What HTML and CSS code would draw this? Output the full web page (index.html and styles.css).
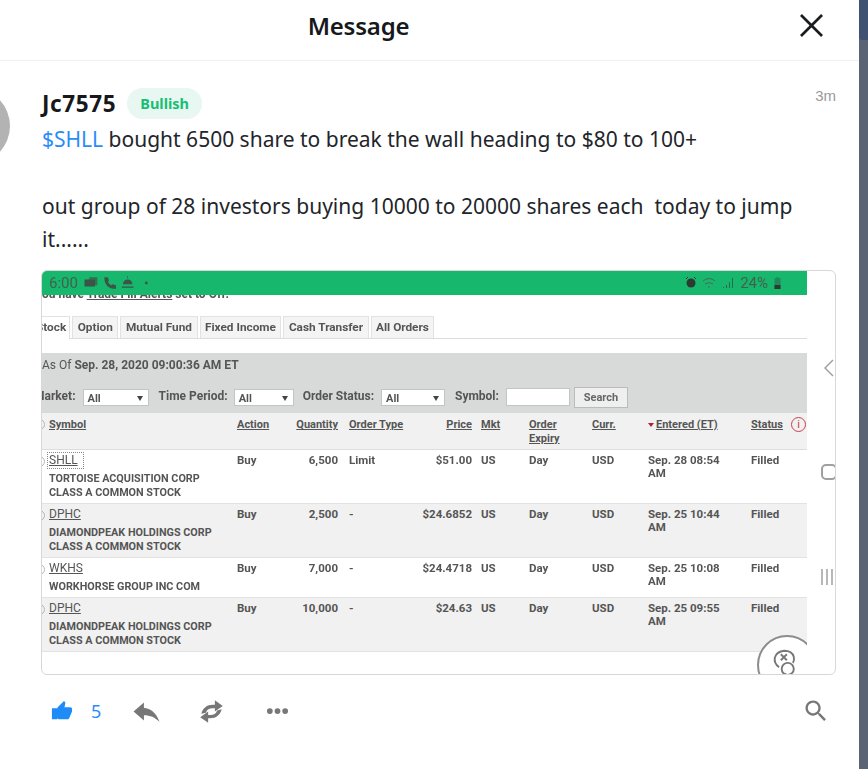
FILE: index.html
```html
<!DOCTYPE html>
<html lang="en">
<head>
  <meta charset="UTF-8" />
  <title>Message</title>
  <link rel="stylesheet" href="styles.css">
</head>
<body>
  <div class="page">
    <main class="modal">
      <header class="modal-head">
        <h1>Message</h1>
        <svg class="close-icon" viewBox="0 0 24 24"><path d="M1 1 L23 23 M23 1 L1 23" /></svg>
      </header>

      <article class="message">
        <div class="avatar"></div>
        <div class="message-body">
          <div class="author-row">
            <span class="author">Jc7575</span>
            <span class="badge">Bullish</span>
            <span class="time">3m</span>
          </div>
          <p class="text"><a href="#">$SHLL</a> bought 6500 share to break the wall heading to $80 to 100+</p>
          <p class="text text-gap">out group of 28 investors buying 10000 to 20000 shares each&nbsp; today to jump it......</p>

          <div class="shot">
            <div class="shot-inner">
              <div class="phone-bar">
                <div class="phone-left">
                  <span>6:00</span>
                  <svg viewBox="0 0 56 12" class="phone-icons-left">
                    <rect x="1" y="3" width="9" height="6" />
                    <rect x="5" y="1" width="7" height="7" opacity="0.7" />
                    <path d="M18 1 l3 0 l1 3 l-1 1 q1 2 3 3 l1 -1 l3 1 l0 3 q-10 0 -10 -10z" />
                    <path d="M33 9 h10 v1 h-10z M34 7 a4 4 0 0 1 8 0z M38 0 v2 h-.5 v-2z" />
                    <circle cx="54" cy="6" r="1.2" />
                  </svg>
                </div>
                <div class="phone-right">
                  <svg viewBox="0 0 50 12" class="phone-icons-right">
                    <circle cx="6" cy="6" r="4.5" />
                    <path d="M1 2 l2 -2 M11 2 l-2 -2" stroke="#333" fill="none" />
                    <path d="M18 4 q6 -5 12 0 M20 7 q4 -3 8 0 M23 10 h2" stroke="#4c6b58" fill="none" />
                    <path d="M38 10 h1 v1 h-1z M41 8 h1 v3 h-1z M44 5 h1 v6 h-1z M47 1 h1 v10 h-1z" opacity="0.6" />
                  </svg>
                  <span>24%</span>
                  <svg viewBox="0 0 8 12" class="phone-battery"><path d="M3 0 h2 v1 h2 v11 h-6 v-11 h2z" opacity="0.35" /><path d="M1 8 h6 v4 h-6z" /></svg>
                </div>
              </div>
              <div class="clip-line"><span>ou have <u>Trade Fill Alerts</u> set to Off.</span></div>

              <div class="tabs">
                <span class="tab tab-on">Stock</span>
                <span class="tab">Option</span>
                <span class="tab">Mutual Fund</span>
                <span class="tab">Fixed Income</span>
                <span class="tab">Cash Transfer</span>
                <span class="tab">All Orders</span>
              </div>

              <div class="filter">
                <div class="as-of">As Of <b>Sep. 28, 2020 09:00:36 AM ET</b></div>
                <div class="filter-row">
                  <b>Market:</b>
                  <span class="select select-a">All<i></i></span>
                  <b>Time Period:</b>
                  <span class="select select-b">All<i></i></span>
                  <b>Order Status:</b>
                  <span class="select select-c">All<i></i></span>
                  <b>Symbol:</b>
                  <span class="symbol-input"></span>
                  <span class="search-btn">Search</span>
                </div>
              </div>

              <table class="orders">
                <colgroup>
                  <col class="c-sym"><col class="c-act"><col class="c-qty"><col class="c-type"><col class="c-price"><col class="c-mkt"><col class="c-exp"><col class="c-cur"><col class="c-ent"><col class="c-stat">
                </colgroup>
                <thead>
                  <tr>
                    <th>Symbol</th><th>Action</th><th class="num qty">Quantity</th><th>Order Type</th><th class="num">Price</th><th>Mkt</th><th>Order<br>Expiry</th><th>Curr.</th>
                    <th><em class="sort"></em>Entered (ET)</th>
                    <th>Status<span class="info">i</span></th>
                  </tr>
                </thead>
                <tbody>
                  <tr class="r-tall">
                    <td><span class="sym sym-focus">SHLL</span><div class="co">TORTOISE ACQUISITION CORP<br>CLASS A COMMON STOCK</div></td>
                    <td>Buy</td><td class="num qty">6,500</td><td>Limit</td><td class="num">$51.00</td><td>US</td><td>Day</td><td>USD</td><td>Sep. 28 08:54<br>AM</td><td>Filled</td>
                  </tr>
                  <tr class="r-tall alt">
                    <td><span class="sym">DPHC</span><div class="co">DIAMONDPEAK HOLDINGS CORP<br>CLASS A COMMON STOCK</div></td>
                    <td>Buy</td><td class="num qty">2,500</td><td>-</td><td class="num">$24.6852</td><td>US</td><td>Day</td><td>USD</td><td>Sep. 25 10:44<br>AM</td><td>Filled</td>
                  </tr>
                  <tr class="r-short">
                    <td><span class="sym">WKHS</span><div class="co">WORKHORSE GROUP INC COM</div></td>
                    <td>Buy</td><td class="num qty">7,000</td><td>-</td><td class="num">$24.4718</td><td>US</td><td>Day</td><td>USD</td><td>Sep. 25 10:08<br>AM</td><td>Filled</td>
                  </tr>
                  <tr class="r-tall alt">
                    <td><span class="sym">DPHC</span><div class="co">DIAMONDPEAK HOLDINGS CORP<br>CLASS A COMMON STOCK</div></td>
                    <td>Buy</td><td class="num qty">10,000</td><td>-</td><td class="num">$24.63</td><td>US</td><td>Day</td><td>USD</td><td>Sep. 25 09:55<br>AM</td><td>Filled</td>
                  </tr>
                </tbody>
              </table>

              <div class="fab">
                <svg viewBox="0 0 44 44"><path d="M14 28 q-6 -4 -5 -11 q2 -7 11 -8 q9 0 11 7 q1 4 -1 7" /><path d="M16 13 l7 7 M23 13 l-7 7" /><circle cx="24" cy="30" r="7" /><path d="M13 44 q1 -8 9 -8" /></svg>
              </div>
            </div>

            <svg class="side side-back" viewBox="0 0 10 18"><path d="M9 1 L1 9 L9 17" /></svg>
            <span class="side side-home"></span>
            <svg class="side side-menu" viewBox="0 0 14 16"><path d="M1 0 V16 M6 0 V16 M11 0 V16" /></svg>
          </div>

          <footer class="actions">
            <div class="actions-left">
              <span class="like">
                <svg viewBox="0 0 24 24"><path d="M1 21h6V9H1v12zm22-11c0-1.100-.9-2-2-2h-6.310l.95-4.570.03-.32c0-.41-.17-.79-.44-1.060L14.170 1 7.590 7.590C7.220 7.950 7 8.450 7 9v10c0 1.100.9 2 2 2h9c.83 0 1.540-.5 1.840-1.220l3.020-7.050c.09-.23.14-.47.14-.73v-2z" /></svg>
                <b>5</b>
              </span>
              <svg class="act act-reply" viewBox="0 0 24 24"><path d="M10 9V5l-8 7 8 7v-4.100c5 0 8.500 1.600 12 5.100-1.500-5-5-10-12-11z" /></svg>
              <svg class="act act-repost" viewBox="0 0 24 24"><path d="M15 2l7 5-7 5V9h-2c-3 0-5 1-6 4l-4 1c1-5 5-8 10-8h2z" /><path d="M9 22l-7-5 7-5v3h2c3 0 5-1 6-4l4-1c-1 5-5 8-10 8H9z" /></svg>
              <svg class="act act-more" viewBox="0 0 24 6"><circle cx="4" cy="3" r="3" /><circle cx="12" cy="3" r="3" /><circle cx="20" cy="3" r="3" /></svg>
            </div>
            <svg class="act act-search" viewBox="0 0 24 24"><path d="M15.500 14h-.79l-.28-.27C15.410 12.590 16 11.110 16 9.500 16 5.910 13.090 3 9.500 3S3 5.910 3 9.500 5.910 16 9.500 16c1.610 0 3.090-.59 4.230-1.570l.27.28v.79l5 4.990L20.490 19l-4.990-5zm-6 0C7.010 14 5 11.990 5 9.500S7.010 5 9.500 5 14 7.010 14 9.500 11.990 14 9.500 14z" /></svg>
          </footer>
        </div>
      </article>
    </main>
    <aside class="backdrop"><div class="backdrop-top"></div></aside>
  </div>
</body>
</html>
```

FILE: styles.css
```css
* {
  box-sizing: border-box;
}

html,
body {
  margin: 0;
  padding: 0;
  height: 100%;
  overflow: hidden;
}

body {
  font-family: "Noto Sans", sans-serif;
  color: #22252a;
  background: #fff;
}

.page {
  display: flex;
  height: 769px;
}

.modal {
  width: 859px;
  overflow: hidden;
  background: #fff;
}

.backdrop {
  flex: 1;
  background: #5b6474;
}

.backdrop-top {
  height: 40px;
  background: #3f5272;
  border-bottom-left-radius: 3px;
}

.modal-head {
  height: 61px;
  display: flex;
  align-items: center;
  justify-content: center;
  position: relative;
  padding: 0 142px 10px 0;
  border-bottom: 1px solid #f0f1f2;
}

.modal-head h1 {
  margin: 0;
  font-size: 24px;
  font-weight: 600;
  letter-spacing: -0.2px;
  color: #16181b;
}

.close-icon {
  position: absolute;
  left: 800px;
  top: 14px;
  width: 23px;
  height: 23px;
  fill: none;
  stroke: #1a1c1f;
  stroke-width: 2.800;
}

.message {
  display: flex;
  padding-top: 25px;
}

.avatar {
  flex: none;
  width: 76px;
  height: 76px;
  margin: 2px 32px 0 -66px;
  border-radius: 50%;
  background: #b3b3b3;
}

.message-body {
  width: 794px;
}

.author-row {
  display: flex;
  align-items: center;
  height: 32px;
  margin: 1px 0 2px;
  position: relative;
}

.author {
  font-size: 22.500px;
  font-weight: 700;
  letter-spacing: 0.6px;
  color: #16181b;
}

.badge {
  margin-left: 11px;
  height: 31px;
  width: 75px;
  border-radius: 16px;
  background: #e8f7f1;
  color: #17bf74;
  font-size: 14.500px;
  font-weight: 700;
  display: flex;
  align-items: center;
  justify-content: center;
}

.time {
  position: absolute;
  right: 0;
  top: 0;
  font-family: "Liberation Sans", sans-serif;
  font-size: 15px;
  color: #9a9a9a;
}

.text {
  margin: 0;
  font-size: 21px;
  line-height: 33px;
  padding-top: 2px;
}

.text-gap {
  margin-top: 32px;
}

.text a {
  color: #2a8cf7;
  text-decoration: none;
}

.shot {
  position: relative;
  margin: 14px 0 0 -1px;
  width: 795px;
  height: 405px;
  border: 1px solid #d8d8d8;
  border-radius: 6px;
  overflow: hidden;
  background: #fff;
}

.shot-inner {
  position: relative;
  width: 765px;
  height: 403px;
  overflow: hidden;
  font-family: Roboto, sans-serif;
  font-size: 11px;
  color: #555;
  filter: blur(0.35px);
}

.phone-bar {
  height: 24px;
  background: #17b76d;
  display: flex;
  align-items: center;
  justify-content: space-between;
  padding: 0 25px 0 7px;
  color: #44604f;
  font-size: 15px;
}

.phone-left,
.phone-right {
  display: flex;
  align-items: center;
  gap: 5px;
}

.phone-icons-left {
  width: 66px;
  height: 14px;
  fill: #3c5546;
}

.phone-icons-right {
  width: 50px;
  height: 12px;
  fill: #2d3a33;
}

.phone-battery {
  width: 9px;
  height: 12px;
  fill: #2d3a33;
}

.clip-line {
  height: 28px;
  overflow: hidden;
  font-weight: 700;
  font-size: 12px;
  line-height: 12px;
  margin-top: -7px;
  position: relative;
  z-index: -1;
}

.tabs {
  display: flex;
  gap: 2px;
  height: 23px;
  margin-left: -16px;
  border-bottom: 1px solid #ddd;
}

.tab {
  padding: 0 4.500px;
  line-height: 21px;
  border: 1px solid #e2e2e2;
  border-bottom: none;
  background: #f4f4f4;
  font-weight: 700;
  color: #555;
  white-space: nowrap;
  font-size: 11.800px;
}

.tab-on {
  background: #fff;
  padding: 0 3px 0 9px;
  height: 23px;
}

.filter {
  margin-top: 14px;
  height: 60px;
  background: #d8d9d9;
  padding-top: 5px;
  white-space: nowrap;
  font-size: 12px;
}

.as-of {
  line-height: 14px;
}

.filter-row {
  display: flex;
  align-items: center;
  margin: 14px 0 0 -8px;
  height: 22px;
}

.filter-row b {
  flex: none;
  padding-bottom: 3px;
}

.select {
  flex: none;
  position: relative;
  height: 17px;
  line-height: 17px;
  margin: 0 10px 0 7px;
  padding-left: 4px;
  background: #fff;
  border: 1px solid #c4c4c4;
  font-weight: 700;
  font-size: 11px;
}

.select-a {
  width: 66px;
}

.select-b {
  width: 60px;
  margin: 0 9px 0 6px;
}

.select-c {
  width: 64px;
}

.select i {
  position: absolute;
  right: 5px;
  top: 6px;
  border: 3px solid transparent;
  border-top: 5px solid #444;
  border-bottom: none;
}

.symbol-input {
  flex: none;
  width: 64px;
  height: 18px;
  margin-left: 7px;
  background: #fff;
  border: 1px solid #c4c4c4;
}

.search-btn {
  flex: none;
  margin-left: 4px;
  width: 54px;
  height: 21px;
  line-height: 19px;
  text-align: center;
  background: #efefef;
  border: 1px solid #bbb;
  font-weight: 700;
  font-size: 11px;
  color: #666;
}

.orders {
  width: 765px;
  table-layout: fixed;
  border-collapse: collapse;
  font-size: 11.500px;
}

.c-sym { width: 188px; }
.c-act { width: 55px; }
.c-qty { width: 57px; }
.c-type { width: 68px; }
.c-price { width: 64px; }
.c-mkt { width: 48px; }
.c-exp { width: 63px; }
.c-cur { width: 56px; }
.c-ent { width: 103px; }
.c-stat { width: 63px; }

.orders th,
.orders td {
  vertical-align: top;
  padding: 4px 0 0 7px;
  text-align: left;
  font-weight: 700;
  line-height: 13.500px;
}

.orders th {
  font-size: 11px;
  text-decoration: underline;
  background: #f1f1f1;
  height: 36px;
  padding-top: 5px;
  border-bottom: 1px solid #ddd;
  position: relative;
}

.orders td {
  border-bottom: 1px solid #e2e2e2;
  position: relative;
}

.orders th:first-child::before,
.orders td:first-child::before {
  content: "";
  position: absolute;
  left: -8px;
  top: 6px;
  width: 9px;
  height: 9px;
  border: 1px solid #b5b5b5;
  border-radius: 50%;
}

.orders .num {
  text-align: right;
  padding-left: 0;
  padding-right: 2px;
}

.orders .qty {
  padding-right: 4px;
}

.r-tall td {
  height: 54px;
}

.r-short td {
  height: 40px;
}

.alt td {
  background: #f1f1f1;
}

.sym {
  display: inline-block;
  font-weight: 400;
  font-size: 12px;
  text-decoration: underline;
  padding-right: 2px;
}

.sym-focus {
  outline: 1px dotted #888;
  outline-offset: 1px;
  padding-right: 4px;
}

.co {
  margin-top: 5px;
  font-size: 10.800px;
}

.sort {
  display: inline-block;
  vertical-align: middle;
  margin-right: 2px;
  border: 3px solid transparent;
  border-top: 4px solid #b3202c;
  border-bottom: none;
}

.info {
  position: absolute;
  left: 47px;
  top: 4px;
  width: 15px;
  height: 15px;
  border: 1.300px solid #c9404f;
  border-radius: 50%;
  color: #c9404f;
  font-weight: 400;
  font-size: 11px;
  line-height: 13px;
  text-align: center;
  background: #f1f1f1;
  display: inline-block;
}

.fab {
  position: absolute;
  left: 715px;
  top: 364px;
  width: 60px;
  height: 60px;
  border: 2px solid #8c8c8c;
  border-radius: 50%;
  background: #fff;
}

.fab svg {
  width: 38px;
  height: 38px;
  margin: 6px 0 0 8px;
  fill: none;
  stroke: #777;
  stroke-width: 2.200;
}

.side {
  position: absolute;
  fill: none;
  stroke: #a0a0a0;
  stroke-width: 1.500;
}

.side-back {
  left: 782px;
  top: 88px;
  width: 10px;
  height: 18px;
}

.side-home {
  left: 779px;
  top: 193px;
  width: 16px;
  height: 16px;
  border: 2px solid #a0a0a0;
  border-radius: 5px;
}

.side-menu {
  left: 779px;
  top: 298px;
  width: 14px;
  height: 16px;
}

.actions {
  display: flex;
  align-items: center;
  justify-content: space-between;
  height: 72px;
  padding: 0 6px 0 9px;
}

.actions-left {
  display: flex;
  align-items: center;
}

.like {
  display: flex;
  align-items: center;
  width: 80px;
  color: #2a8cf7;
}

.like svg {
  width: 22px;
  height: 22px;
  fill: #1f8bf7;
}

.like b {
  margin-left: 18px;
  font-weight: 400;
  font-size: 18px;
}

.act {
  fill: #777;
}

.act-reply {
  width: 31px;
  height: 31px;
  margin-right: 36px;
}

.act-repost {
  width: 27px;
  height: 27px;
  margin-right: 41px;
}

.act-more {
  width: 23px;
  height: 6px;
}

.act-search {
  width: 28px;
  height: 28px;
}
```
